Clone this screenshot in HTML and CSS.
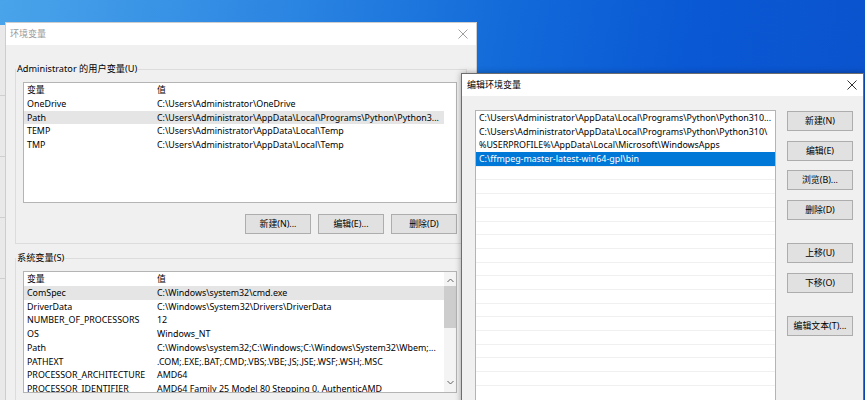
FILE: index.html
```html
<!DOCTYPE html>
<html lang="zh-CN">
<head>
<meta charset="utf-8">
<title>环境变量</title>
<link rel="stylesheet" href="styles.css">
</head>
<body>
<div class="desktop">
  <div class="behind"><i></i><i></i><i></i><i></i></div>

  <section class="win win-env">
    <header class="titlebar inactive">
      <span class="title">环境变量</span>
      <svg class="close" width="10" height="10" viewBox="0 0 10 10"><path d="M0.5 0.5 L9.5 9.5 M9.5 0.5 L0.5 9.5"/></svg>
    </header>
    <div class="env-body">
      <fieldset class="group">
        <legend>Administrator 的用户变量(U)</legend>
        <div class="list user-list">
          <div class="rows">
            <div class="row"><span class="k">变量</span><span class="v">值</span></div>
            <div class="row"><span class="k">OneDrive</span><span class="v">C:\Users\Administrator\OneDrive</span></div>
            <div class="row hl"><span class="k">Path</span><span class="v">C:\Users\Administrator\AppData\Local\Programs\Python\Python3...</span></div>
            <div class="row"><span class="k">TEMP</span><span class="v">C:\Users\Administrator\AppData\Local\Temp</span></div>
            <div class="row"><span class="k">TMP</span><span class="v">C:\Users\Administrator\AppData\Local\Temp</span></div>
          </div>
        </div>
        <div class="btnrow">
          <button class="btn">新建(N)...</button>
          <button class="btn">编辑(E)...</button>
          <button class="btn">删除(D)</button>
        </div>
      </fieldset>

      <fieldset class="group group-sys">
        <legend>系统变量(S)</legend>
        <div class="list sys-list">
          <div class="rows">
            <div class="row"><span class="k">变量</span><span class="v">值</span></div>
            <div class="row hl"><span class="k">ComSpec</span><span class="v">C:\Windows\system32\cmd.exe</span></div>
            <div class="row"><span class="k">DriverData</span><span class="v">C:\Windows\System32\Drivers\DriverData</span></div>
            <div class="row"><span class="k">NUMBER_OF_PROCESSORS</span><span class="v">12</span></div>
            <div class="row"><span class="k">OS</span><span class="v">Windows_NT</span></div>
            <div class="row"><span class="k">Path</span><span class="v">C:\Windows\system32;C:\Windows;C:\Windows\System32\Wbem;...</span></div>
            <div class="row"><span class="k">PATHEXT</span><span class="v">.COM;.EXE;.BAT;.CMD;.VBS;.VBE;.JS;.JSE;.WSF;.WSH;.MSC</span></div>
            <div class="row"><span class="k">PROCESSOR_ARCHITECTURE</span><span class="v">AMD64</span></div>
            <div class="row"><span class="k">PROCESSOR_IDENTIFIER</span><span class="v">AMD64 Family 25 Model 80 Stepping 0, AuthenticAMD</span></div>
          </div>
          <div class="scrollbar">
            <svg class="arrow" width="7" height="5" viewBox="0 0 7 5"><path d="M0.5 4 L3.5 1 L6.5 4"/></svg>
            <div class="thumb"></div>
            <div class="track"></div>
            <svg class="arrow" width="7" height="5" viewBox="0 0 7 5"><path d="M0.5 1 L3.5 4 L6.5 1"/></svg>
          </div>
        </div>
      </fieldset>
    </div>
  </section>

  <section class="win win-edit">
    <header class="titlebar">
      <span class="title">编辑环境变量</span>
      <svg class="close" width="10" height="10" viewBox="0 0 10 10"><path d="M0.5 0.5 L9.5 9.5 M9.5 0.5 L0.5 9.5"/></svg>
    </header>
    <div class="edit-body">
      <div class="list path-list">
        <div class="prow">C:\Users\Administrator\AppData\Local\Programs\Python\Python310...</div>
        <div class="prow">C:\Users\Administrator\AppData\Local\Programs\Python\Python310\</div>
        <div class="prow">%USERPROFILE%\AppData\Local\Microsoft\WindowsApps</div>
        <div class="prow sel">C:\ffmpeg-master-latest-win64-gpl\bin</div>
        <div class="prow empty"></div>
        <div class="prow empty"></div>
        <div class="prow empty"></div>
        <div class="prow empty"></div>
        <div class="prow empty"></div>
        <div class="prow empty"></div>
        <div class="prow empty"></div>
        <div class="prow empty"></div>
        <div class="prow empty"></div>
        <div class="prow empty"></div>
        <div class="prow empty"></div>
        <div class="prow empty"></div>
        <div class="prow empty"></div>
        <div class="prow empty"></div>
        <div class="prow empty"></div>
        <div class="prow empty"></div>
        <div class="prow empty"></div>
      </div>
      <div class="btncol">
        <button class="btn">新建(N)</button>
        <button class="btn">编辑(E)</button>
        <button class="btn">浏览(B)...</button>
        <button class="btn">删除(D)</button>
        <button class="btn spaced">上移(U)</button>
        <button class="btn">下移(O)</button>
        <button class="btn spaced">编辑文本(T)...</button>
      </div>
    </div>
  </section>
</div>
</body>
</html>
```

FILE: styles.css
```css
* { box-sizing: border-box; }

body {
  margin: 0;
  font-family: "Noto Sans", "Noto Sans CJK SC", sans-serif;
  font-size: 8.9px;
  color: #000;
}

.desktop {
  position: relative;
  width: 865px;
  height: 400px;
  overflow: hidden;
  background: linear-gradient(100deg, #4aa4ea 0%, #2c86e2 30%, #126ad9 55%, #0a58d4 75%, #0b52cc 100%);
}

.behind {
  position: absolute;
  left: 0;
  top: 25px;
  width: 5px;
  height: 375px;
  background: #e9e9e9;
  display: flex;
  flex-direction: column;
  gap: 60px;
  padding-top: 70px;
}
.behind i {
  display: block;
  height: 1px;
  background: #cfcfcf;
}

.win {
  position: absolute;
  background: #f0f0f0;
  display: flex;
  flex-direction: column;
}

.win-env {
  left: 5px;
  top: 22px;
  width: 472px;
  height: 400px;
  border: 1px solid #cdcdcd;
}

.win-edit {
  left: 461px;
  top: 73px;
  width: 403px;
  height: 340px;
  border: 1px solid #6d6d6d;
  box-shadow: 0 0 6px rgba(0, 0, 0, 0.35);
}

.titlebar {
  flex: none;
  height: 22px;
  background: #fff;
  display: flex;
  align-items: center;
  justify-content: space-between;
  padding: 0 6px 0 5px;
}
.titlebar .title { line-height: 14px; font-size: 9px; }
.titlebar .close { stroke: #333; stroke-width: 1; fill: none; }
.win-env .titlebar { padding: 0 8px 0 4px; }
.titlebar.inactive .title { color: #9a9a9a; }
.titlebar.inactive .close { stroke: #a0a0a0; }

.env-body {
  display: flex;
  flex-direction: column;
}

.group {
  margin: 17px 9px 0 9px;
  border: 1px solid #dcdcdc;
  padding: 6px 9px 9px 7px;
  min-width: 0;
}
.group legend {
  padding: 0 1px;
  margin-left: -7px;
  line-height: 14px;
  font-size: 9.2px;
}
.group-sys { margin-top: 7px; }

.list {
  background: #fff;
  border: 1px solid #b4b4b4;
  overflow: hidden;
}

.user-list { height: 121px; }
.sys-list { height: 122px; display: flex; }
.sys-list .rows { flex: 1; min-width: 0; }

.row {
  display: flex;
  width: 420px;
  height: 13.75px;
  line-height: 13.75px;
  white-space: nowrap;
}
.row.hl { background: #e5e5e5; }
.row .k { flex: none; width: 130px; padding-left: 3px; overflow: hidden; }
.row .v { flex: none; width: 290px; padding-left: 3px; overflow: hidden; }

.scrollbar {
  flex: none;
  width: 12px;
  background: #f4f4f4;
  display: flex;
  flex-direction: column;
  align-items: center;
  padding: 6px 0 0;
}
.scrollbar .arrow { stroke: #606060; stroke-width: 1; fill: none; flex: none; }
.scrollbar .thumb {
  width: 100%;
  height: 42px;
  margin-top: 3px;
  background: #cdcdcd;
}
.scrollbar .track { height: 52px; }

.btnrow {
  display: flex;
  justify-content: flex-end;
  gap: 7px;
  margin-top: 11px;
}

.btn {
  width: 66px;
  height: 20px;
  padding: 0;
  border: 1px solid #adadad;
  background: #e1e1e1;
  font: inherit;
  color: #000;
  line-height: 18px;
  text-align: center;
}

.edit-body {
  display: flex;
  gap: 11px;
  padding: 14px 10px 0 13px;
}

.path-list {
  flex: none;
  width: 301px;
  height: 320px;
}

.prow {
  height: 13.7px;
  line-height: 13.7px;
  padding-left: 3px;
  white-space: nowrap;
  overflow: hidden;
}
.prow.sel { background: #0078d7; color: #fff; }
.prow.empty { border-top: 1px solid #f0f0f0; }

.btncol {
  display: flex;
  flex-direction: column;
  gap: 9.5px;
  padding-top: 1px;
}
.btncol .spaced { margin-top: 14px; }
```
